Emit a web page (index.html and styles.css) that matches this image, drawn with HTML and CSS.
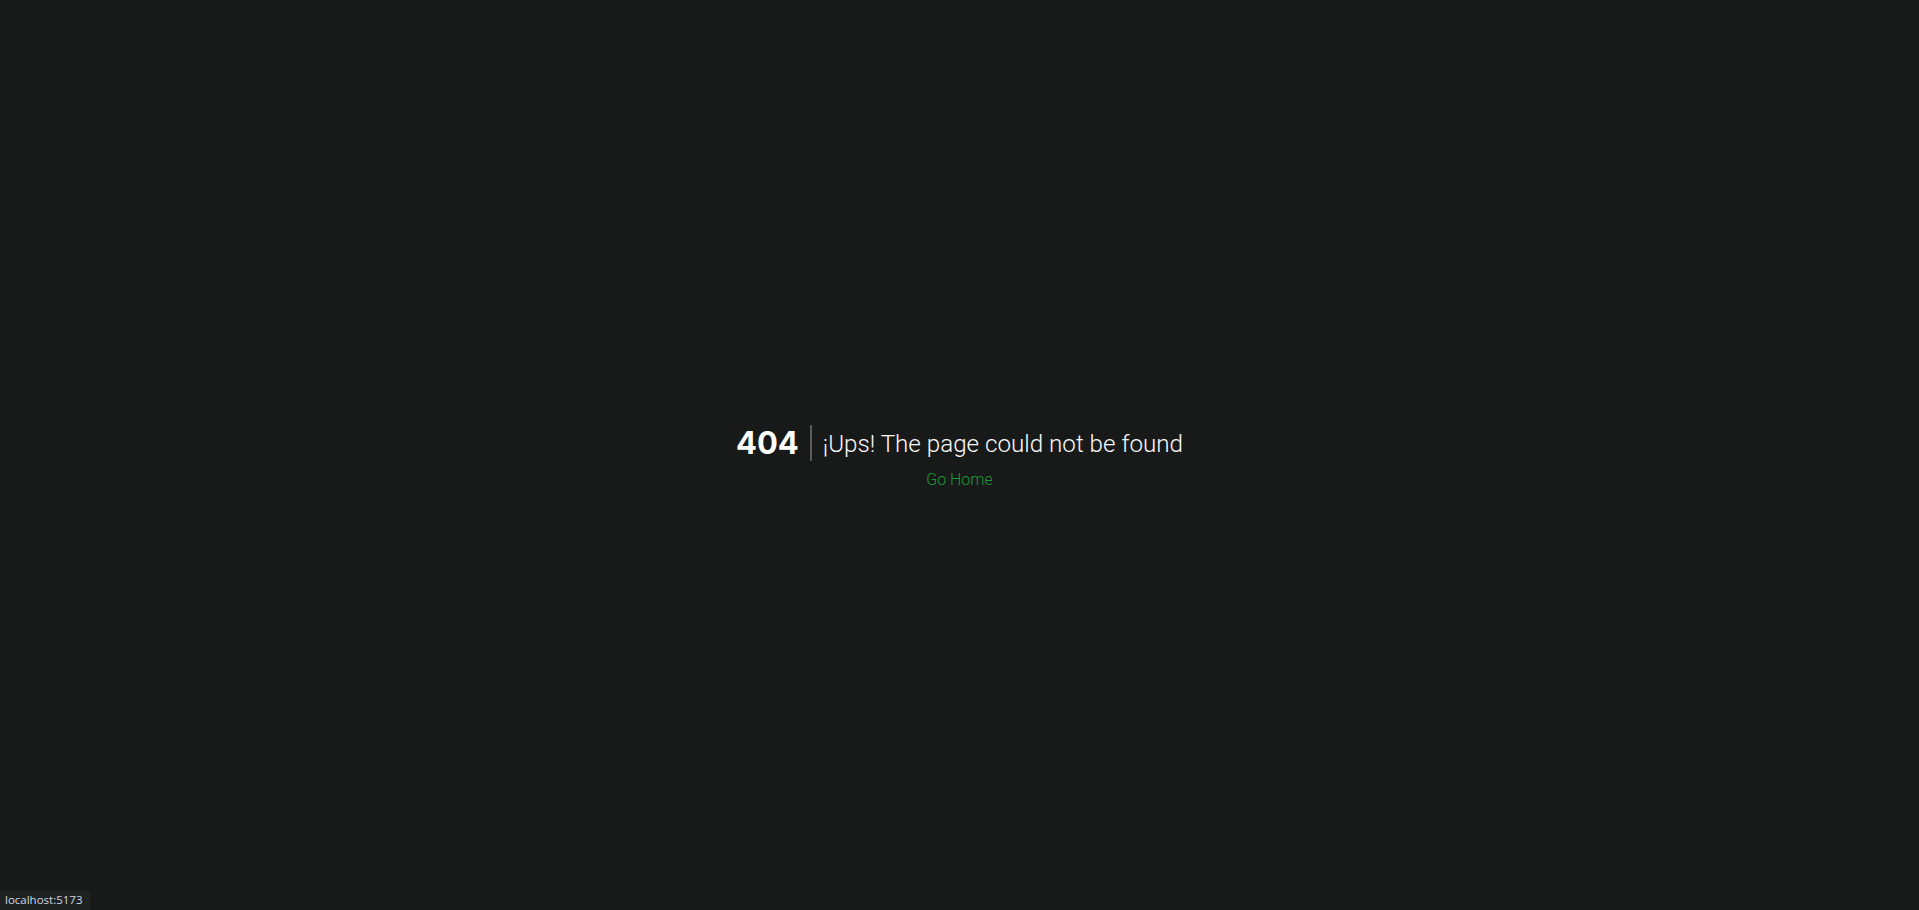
FILE: index.html
```html
<!DOCTYPE html>
<html lang="en">
<head>
<meta charset="utf-8">
<title>404</title>
<link rel="stylesheet" href="styles.css">
</head>
<body>
<main class="page">
  <div class="notfound">
    <div class="row">
      <h1 class="code">404</h1>
      <span class="divider"></span>
      <p class="message">¡Ups! The page could not be found</p>
    </div>
    <a class="home" href="#">Go Home</a>
  </div>
</main>
<div class="status">localhost:5173</div>
</body>
</html>
```
FILE: styles.css
```css
html, body {
  margin: 0;
  padding: 0;
  height: 100%;
}
body {
  background: #181919;
  font-family: Roboto, "Liberation Sans", sans-serif;
  color: #ffffff;
}
.page {
  height: 100%;
  display: flex;
  align-items: center;
  justify-content: center;
}
.notfound {
  display: flex;
  flex-direction: column;
  align-items: center;
  gap: 7px;
  transform: translateY(3px);
}
.row {
  display: flex;
  align-items: center;
  gap: 11px;
}
.code {
  margin: 0;
  font-family: Inter, "Liberation Sans", sans-serif;
  font-weight: 700;
  font-size: 31px;
  line-height: 36px;
  color: #ffffff;
}
.divider {
  width: 2px;
  height: 36px;
  background: #5a5b5b;
}
.message {
  margin: 0;
  font-weight: 300;
  font-size: 24.2px;
  line-height: 36px;
  color: #fafafa;
  transform: translateY(1px);
}
.home {
  font-weight: 300;
  font-size: 16px;
  line-height: 24px;
  color: #1c9a36;
  text-decoration: none;
}
.status {
  position: fixed;
  left: 0;
  bottom: 0;
  height: 20px;
  padding: 0 7px 0 5px;
  background: #202222;
  border-top-right-radius: 4px;
  color: #cdd5e4;
  font-family: "Open Sans", "DejaVu Sans", sans-serif;
  font-size: 11.5px;
  line-height: 20px;
}
```
